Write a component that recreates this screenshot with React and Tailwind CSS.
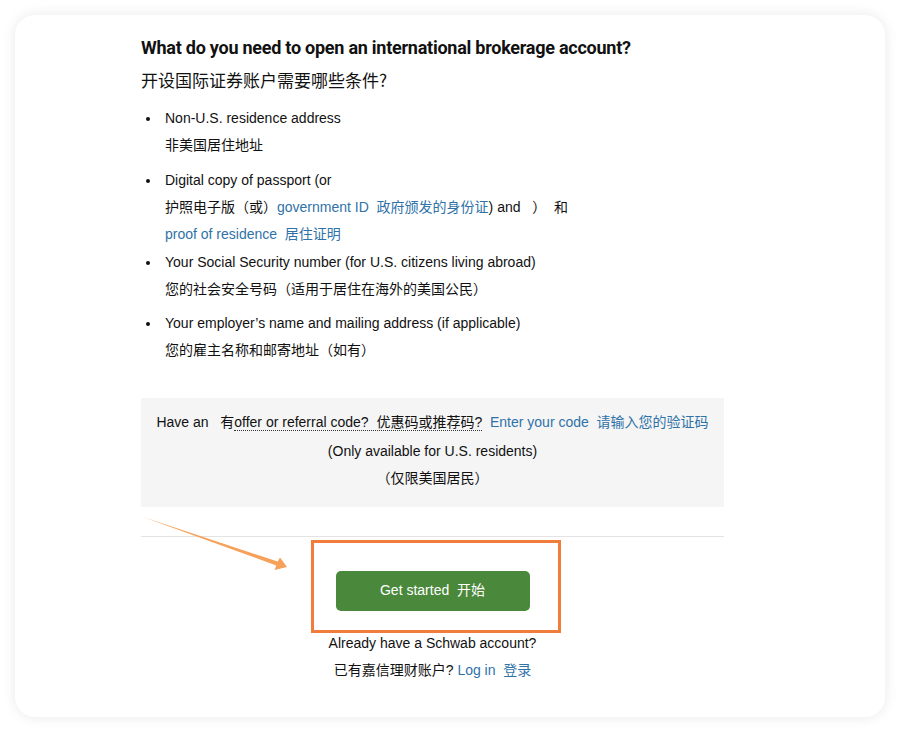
import React from "react";

const font = { fontFamily: '"Liberation Sans", Arial, "Noto Sans CJK SC", sans-serif' };

const Link = ({ children }) => <span className="text-[#2f72a8]">{children}</span>;

const items = [
  {
    lines: [<>Non-U.S. residence address</>, <>非美国居住地址</>],
    mb: "mb-[8px]",
  },
  {
    lines: [
      <>Digital copy of passport (or</>,
      <>
        护照电子版（或）<Link>government ID&nbsp; 政府颁发的身份证</Link>) and &nbsp;&nbsp;） &nbsp;和
      </>,
      <>
        <Link>proof of residence&nbsp; 居住证明</Link>
      </>,
    ],
    mb: "mb-[1px]",
  },
  {
    lines: [
      <>Your Social Security number (for U.S. citizens living abroad)</>,
      <>您的社会安全号码（适用于居住在海外的美国公民）</>,
    ],
    mb: "mb-[7px]",
  },
  {
    lines: [
      <>Your employer’s name and mailing address (if applicable)</>,
      <>您的雇主名称和邮寄地址（如有）</>,
    ],
    mb: "",
  },
];

export default function App() {
  return (
    <div className="min-h-screen bg-white pt-[15px] pl-[15px]" style={font}>
      <div className="relative w-[870px] h-[702px] rounded-[20px] bg-white shadow-[0_0_14px_rgba(0,0,0,0.09)] pl-[126px] pt-[21px] text-[#111]">
        <div className="w-[583px]">
          <h1
            className="text-[18px] leading-[24px] font-bold tracking-[-0.25px] whitespace-nowrap"
            style={{ fontFamily: 'Roboto, sans-serif' }}
          >
            What do you need to open an international brokerage account?
          </h1>
          <div className="mt-[5.5px] text-[17px] leading-[27px]" style={{ fontFamily: '"Noto Sans CJK SC", sans-serif' }}>
            开设国际证券账户需要哪些条件?
          </div>

          <ul className="mt-[12px] pl-[24px] text-[14px] leading-[27px]">
            {items.map((it, i) => (
              <li key={i} className={`relative ${it.mb}`}>
                <span className="absolute left-[-19px] top-[12px] w-[4px] h-[4px] rounded-full bg-[#111]" />
                {it.lines.map((l, j) => (
                  <div key={j}>{l}</div>
                ))}
              </li>
            ))}
          </ul>

          <div className="mt-[34.5px] bg-[#f5f5f5] pt-[10px] pb-[14.5px] text-center text-[14px]">
            <div className="leading-[28px]">
              Have an &nbsp;&nbsp;有
              <span className="border-b border-dotted border-[#333]">offer or referral code? &nbsp;优惠码或推荐码?</span>
              &nbsp; <Link>Enter your code&nbsp; 请输入您的验证码</Link>
            </div>
            <div className="leading-[27px] mt-[2px]">(Only available for U.S. residents)</div>
            <div className="leading-[27px]">（仅限美国居民）</div>
          </div>

          <div className="mt-[29px] h-px bg-[#e3e3e3]" />

          <div className="flex justify-center">
            <div className="mt-[3px] ml-[6px] w-[250px] h-[93px] border-[3px] border-[#f07d3c] pt-[28px] pl-[22px]">
              <button className="w-[194px] h-[40px] rounded-[5px] bg-[#4a883b] text-white text-[14px]">
                Get started&nbsp; 开始
              </button>
            </div>
          </div>

          <div className="text-center text-[14px]">
            <div className="leading-[20px]">Already have a Schwab account?</div>
            <div className="leading-[20px] mt-[7px]">
              已有嘉信理财账户? <Link>Log in&nbsp; 登录</Link>
            </div>
          </div>
        </div>

        <svg className="absolute left-[125px] top-[499px]" width="150" height="61" viewBox="0 0 150 61">
          <polygon
            points="3,3 137.7,47.6 140,43.5 147,53 134.5,56 136.3,51.4"
            fill="#f7a05a"
          />
        </svg>
      </div>
    </div>
  );
}
